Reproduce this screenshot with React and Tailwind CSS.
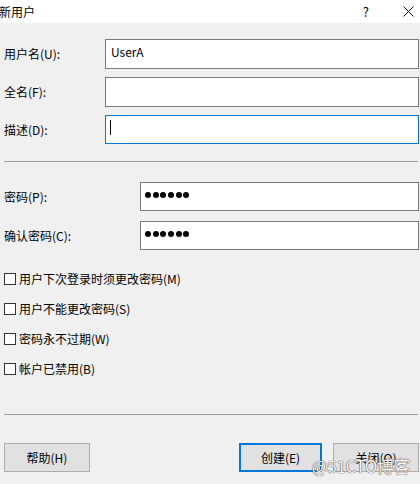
import React from "react";

const font = { fontFamily: '"Noto Sans CJK SC", "Noto Sans", sans-serif' };

function Field({ label, labelW, children, focused, h = "h-[30px]" }) {
  return (
    <div className="flex items-center">
      <div className="shrink-0 text-[12px] text-black" style={{ width: labelW }}>
        {label}
      </div>
      <div
        className={`flex-1 ${h} bg-white border ${
          focused ? "border-[#0078d7]" : "border-[#7a7a7a]"
        } flex items-center pl-[4px]`}
      >
        {children}
      </div>
    </div>
  );
}

function Dots() {
  return (
    <div className="flex gap-[1.7px] -mt-[3px]">
      {[0, 1, 2, 3, 4, 5].map((i) => (
        <div key={i} className="w-[6px] h-[6px] rounded-full bg-black" />
      ))}
    </div>
  );
}

function Check({ label }) {
  return (
    <div className="flex items-center h-[30px]">
      <div className="w-[12px] h-[12px] border border-[#333] bg-white shrink-0" />
      <span className="ml-[3px] text-[12px] text-black">{label}</span>
    </div>
  );
}

export default function App() {
  return (
    <div className="w-[420px] h-[484px] bg-[#f0f0f0] overflow-hidden relative" style={font}>
      <div className="h-[23px] bg-white flex items-center">
        <span className="text-[12px] text-black -ml-[1px]">新用户</span>
        <span className="ml-auto mr-[34px] text-[13px] text-black">?</span>
        <svg width="11" height="11" viewBox="0 0 11 11" className="mr-[6px]">
          <path d="M0.5 0.5L10.5 10.5M10.5 0.5L0.5 10.5" stroke="#111" strokeWidth="1" />
        </svg>
      </div>

      <div className="pl-[4px] pr-[1px] pt-[16px] flex flex-col gap-[8px]">
        <Field label="用户名(U):" labelW={101}>
          <span className="text-[12px] text-black -mt-[4px] ml-[1px]">UserA</span>
        </Field>
        <Field label="全名(F):" labelW={101} />
        <Field label="描述(D):" labelW={101} focused h="h-[29px]">
          <div className="w-px h-[15px] bg-black -mt-[5px]" />
        </Field>
      </div>

      <div className="mx-[4px] mr-[2px] mt-[17px] h-px bg-[#a0a0a0]" />

      <div className="pl-[4px] pr-[1px] pt-[20px] flex flex-col gap-[10px]">
        <Field label="密码(P):" labelW={136} h="h-[29px]">
          <Dots />
        </Field>
        <Field label="确认密码(C):" labelW={136} h="h-[29px]">
          <Dots />
        </Field>
      </div>

      <div className="pl-[4px] mt-[14px] flex flex-col">
        <Check label="用户下次登录时须更改密码(M)" />
        <Check label="用户不能更改密码(S)" />
        <Check label="密码永不过期(W)" />
        <Check label="帐户已禁用(B)" />
      </div>

      <div className="mx-[4px] mr-[2px] mt-[30px] h-px bg-[#a0a0a0]" />

      <div className="flex pl-[4px] pr-[1px] mt-[28px]">
        <button className="w-[86px] h-[29px] bg-[#e1e1e1] border border-[#adadad] text-[12px] text-black">
          帮助(H)
        </button>
        <button className="ml-auto w-[83px] h-[29px] bg-[#e1e1e1] border-2 border-[#0078d7] text-[12px] text-black">
          创建(E)
        </button>
        <button className="ml-[11px] w-[86px] h-[29px] bg-[#e1e1e1] border border-[#adadad] text-[12px] text-black">
          关闭(O)
        </button>
      </div>

      <div className="absolute left-[312px] top-[457px] text-[17px] leading-none text-[#f4f4f4] [text-shadow:0_0_1px_#444,0_0_1px_#444] tracking-[-0.5px]">
        @51CTO博客
      </div>
    </div>
  );
}
